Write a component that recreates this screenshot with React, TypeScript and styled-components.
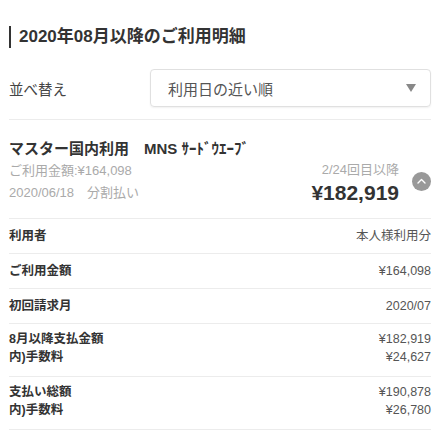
import styled, { createGlobalStyle } from 'styled-components';

const GlobalStyle = createGlobalStyle`
  body {
    margin: 0;
    background: #ffffff;
    font-family: 'Liberation Sans', 'Noto Sans CJK JP', sans-serif;
    color: #333333;
  }
`;

const Page = styled.div`
  padding: 0 9px;
  width: 422px;
`;

const Heading = styled.h2`
  margin: 26px 0 0;
  height: 22px;
  line-height: 22px;
  border-left: 2px solid #333333;
  padding-left: 8px;
  font-size: 17px;
  font-weight: 700;
  color: #333333;
`;

const SortRow = styled.div`
  display: flex;
  align-items: center;
  margin-top: 21px;
  padding-bottom: 12px;
  border-bottom: 1px solid #ececec;
`;

const SortLabel = styled.div`
  width: 141px;
  font-size: 14.5px;
  color: #444444;
`;

const Select = styled.div`
  flex: 1;
  height: 36px;
  border: 1px solid #e0e0e0;
  border-radius: 4px;
  display: flex;
  align-items: center;
  justify-content: space-between;
  padding: 0 14px 0 17px;
  font-size: 15px;
  color: #555555;
  box-shadow: 0 1px 2px rgba(0, 0, 0, 0.06);
`;

const Arrow = styled.span`
  width: 0;
  height: 0;
  border-left: 5px solid transparent;
  border-right: 5px solid transparent;
  border-top: 8px solid #888888;
`;

const Summary = styled.div`
  padding: 18px 0 12px;
  border-bottom: 1px solid #ececec;
`;

const SummaryTitle = styled.div`
  font-size: 15px;
  font-weight: 700;
  line-height: 22px;
  color: #333333;
  white-space: pre;
`;

const SummaryBody = styled.div`
  display: flex;
  align-items: center;
`;

const Column = styled.div<{ $right?: boolean }>`
  flex: ${(p) => (p.$right ? '0 0 auto' : '1')};
  text-align: ${(p) => (p.$right ? 'right' : 'left')};
`;

const SubLine = styled.div<{ $tall?: boolean }>`
  font-size: 13px;
  line-height: ${(p) => (p.$tall ? '24px' : '20px')};
  color: #aaaaaa;
  white-space: pre;
`;

const Amount = styled.div`
  font-size: 21px;
  font-weight: 700;
  line-height: 26px;
  color: #333333;
`;

const Toggle = styled.div`
  width: 19px;
  height: 19px;
  border-radius: 50%;
  background: #999999;
  margin: 0 0 4px 13px;
  display: flex;
  align-items: center;
  justify-content: center;
`;

const DetailRow = styled.div<{ $double?: boolean }>`
  display: grid;
  grid-template-columns: 1fr auto;
  align-items: center;
  height: ${(p) => (p.$double ? 'auto' : '34px')};
  padding: ${(p) => (p.$double ? '6px 0 10px' : '0')};
  border-bottom: 1px solid #ececec;
  font-size: 12.5px;
  line-height: 18px;
`;

const Label = styled.div`
  font-weight: 700;
  color: #333333;
`;

const Value = styled.div`
  text-align: right;
  color: #555555;
`;

type Detail = { label: string; value: string; subLabel?: string; subValue?: string };

const details: Detail[] = [
  { label: '利用者', value: '本人様利用分' },
  { label: 'ご利用金額', value: '¥164,098' },
  { label: '初回請求月', value: '2020/07' },
  { label: '8月以降支払金額', value: '¥182,919', subLabel: '内)手数料', subValue: '¥24,627' },
  { label: '支払い総額', value: '¥190,878', subLabel: '内)手数料', subValue: '¥26,780' },
];

export default function App() {
  return (
    <Page>
      <GlobalStyle />
      <Heading>2020年08月以降のご利用明細</Heading>

      <SortRow>
        <SortLabel>並べ替え</SortLabel>
        <Select>
          <span>利用日の近い順</span>
          <Arrow />
        </Select>
      </SortRow>

      <Summary>
        <SummaryTitle>マスター国内利用　MNS ｻｰﾄﾞｳｴｰﾌﾞ</SummaryTitle>
        <SummaryBody>
          <Column>
            <SubLine>ご利用金額:¥164,098</SubLine>
            <SubLine $tall>2020/06/18　分割払い</SubLine>
          </Column>
          <Column $right>
            <SubLine>2/24回目以降</SubLine>
            <Amount>¥182,919</Amount>
          </Column>
          <Toggle>
            <svg width="9" height="6" viewBox="0 0 9 6">
              <path d="M1 5 L4.5 1.5 L8 5" stroke="#fff" strokeWidth="1.4" fill="none" strokeLinecap="round" strokeLinejoin="round" />
            </svg>
          </Toggle>
        </SummaryBody>
      </Summary>

      {details.map((d) => (
        <DetailRow key={d.label + d.value} $double={!!d.subLabel}>
          <Label>{d.label}</Label>
          <Value>{d.value}</Value>
          {d.subLabel && <Label>{d.subLabel}</Label>}
          {d.subValue && <Value>{d.subValue}</Value>}
        </DetailRow>
      ))}
    </Page>
  );
}
